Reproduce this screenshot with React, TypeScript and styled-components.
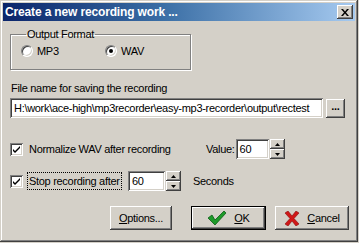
import React from "react";
import styled, { createGlobalStyle } from "styled-components";

const Global = createGlobalStyle`
  html, body { margin: 0; padding: 0; background: #d4d0c8; }
  body { font-family: "Liberation Sans", Arial, sans-serif; font-size: 11px; letter-spacing: -0.3px; color: #000; }
`;

const Window = styled.div`
  box-sizing: border-box;
  width: 358px;
  height: 242px;
  padding: 3px;
  background: #d4d0c8;
  box-shadow: inset -1px -1px #404040, inset 1px 1px #d4d0c8,
    inset -2px -2px #808080, inset 2px 2px #ffffff;
  display: flex;
  flex-direction: column;
`;

const TitleBar = styled.div`
  height: 18px;
  background: linear-gradient(90deg, #0a246a 0%, #3a6ea5 45%, #a6caf0 100%);
  display: flex;
  align-items: center;
  justify-content: space-between;
  padding: 0 2px 0 2px;
`;

const Title = styled.span`
  color: #fff;
  font-weight: bold;
  font-size: 12px;
  letter-spacing: -0.15px;
  font-family: "Liberation Sans", Arial, sans-serif;
  white-space: nowrap;
`;

const CloseBtn = styled.div`
  box-sizing: border-box;
  width: 16px;
  height: 14px;
  background: #d4d0c8;
  box-shadow: inset -1px -1px #404040, inset 1px 1px #ffffff, inset -2px -2px #808080;
  display: flex;
  align-items: center;
  justify-content: center;
`;

const Body = styled.div`
  flex: 1;
  display: flex;
  flex-direction: column;
  padding: 0 0 0 7px;
`;

const Group = styled.fieldset`
  width: 181px;
  box-sizing: border-box;
  height: 42px;
  margin: 7px 0 0 0;
  padding: 3px 0 0 10px;
  border: 1px solid #808080;
  box-shadow: inset 1px 1px #fff, 1px 1px #fff;
  display: flex;
`;

const Legend = styled.legend`
  padding: 0 1px;
  margin-left: 5px;
  font-size: 11px;
  line-height: 13px;
`;

const RadioLabel = styled.label`
  display: flex;
  align-items: center;
  gap: 4px;
  width: 84px;
  font-size: 11px;
  height: 14px;
`;

const RadioCircle = styled.span<{ $checked?: boolean }>`
  box-sizing: border-box;
  width: 12px;
  height: 12px;
  border-radius: 50%;
  background: #fff;
  border: 1px solid #808080;
  border-right-color: #fff;
  border-bottom-color: #fff;
  box-shadow: inset 1px 1px #404040, inset -1px -1px #d4d0c8;
  display: flex;
  align-items: center;
  justify-content: center;
  &::after {
    content: "";
    display: ${(p) => (p.$checked ? "block" : "none")};
    width: 4px;
    height: 4px;
    border-radius: 50%;
    background: #000;
  }
`;

const FieldLabel = styled.div`
  margin-top: 11px;
  padding-left: 1px;
  font-size: 11px;
  line-height: 14px;
`;

const Row = styled.div<{ $mt?: number }>`
  display: flex;
  align-items: center;
  margin-top: ${(p) => p.$mt ?? 0}px;
`;

const LeftCell = styled.div<{ $w: number }>`
  display: flex;
  align-items: center;
  width: ${(p) => p.$w}px;
  flex-shrink: 0;
`;

const Sunken = styled.div<{ $w: number; $h?: number }>`
  box-sizing: border-box;
  width: ${(p) => p.$w}px;
  height: ${(p) => p.$h ?? 20}px;
  background: #fff;
  box-shadow: inset 1px 1px #808080, inset -1px -1px #ffffff,
    inset 2px 2px #404040, inset -2px -2px #d4d0c8;
  padding: 3px 0 0 4px;
  font-size: 11px;
  line-height: 14px;
  white-space: nowrap;
  overflow: hidden;
`;

const RaisedButton = styled.div<{ $w: number; $h: number; $focus?: boolean }>`
  box-sizing: border-box;
  width: ${(p) => p.$w}px;
  height: ${(p) => p.$h}px;
  background: #d4d0c8;
  box-shadow: ${(p) =>
    p.$focus
      ? "inset -1px -1px #000, inset 1px 1px #000, inset -2px -2px #404040, inset 2px 2px #fff, inset -3px -3px #808080"
      : "inset -1px -1px #404040, inset 1px 1px #ffffff, inset -2px -2px #808080"};
  display: flex;
  align-items: center;
  justify-content: center;
  gap: 7px;
  font-size: 11px;
  flex-shrink: 0;
`;

const Spin = styled.div`
  display: flex;
  flex-direction: column;
  margin-left: 1px;
`;

const SpinBtn = styled.div`
  box-sizing: border-box;
  width: 15px;
  height: 10px;
  background: #d4d0c8;
  box-shadow: inset -1px -1px #404040, inset 1px 1px #ffffff, inset -2px -2px #808080;
  display: flex;
  align-items: center;
  justify-content: center;
`;

const Check = styled.span`
  box-sizing: border-box;
  width: 13px;
  height: 13px;
  background: #fff;
  box-shadow: inset 1px 1px #808080, inset -1px -1px #ffffff,
    inset 2px 2px #404040, inset -2px -2px #d4d0c8;
  display: flex;
  align-items: center;
  justify-content: center;
  flex-shrink: 0;
`;

const CheckText = styled.span<{ $focus?: boolean }>`
  font-size: 11px;
  line-height: 14px;
  margin-left: 4px;
  padding: 1px 1px;
  border: 1px dotted ${(p) => (p.$focus ? "#000" : "transparent")};
`;

const Plain = styled.span<{ $ml?: number }>`
  font-size: 11px;
  margin-left: ${(p) => p.$ml ?? 0}px;
`;

const Spacer = styled.div<{ $w: number }>`
  width: ${(p) => p.$w}px;
  flex-shrink: 0;
`;

const ButtonRow = styled.div`
  display: flex;
  margin-top: 15px;
  padding-left: 100px;
`;

const U = styled.span`
  text-decoration: underline;
`;

const Tick = () => (
  <svg width="9" height="9" viewBox="0 0 9 9">
    <path d="M1 4 L3 6 L8 1 L8 3 L3 8 L1 6 Z" fill="#000" />
  </svg>
);

const SpinArrows = () => (
  <Spin>
    <SpinBtn>
      <svg width="5" height="3" viewBox="0 0 5 3"><path d="M2.5 0 L5 3 L0 3 Z" fill="#000" /></svg>
    </SpinBtn>
    <SpinBtn>
      <svg width="5" height="3" viewBox="0 0 5 3"><path d="M0 0 L5 0 L2.5 3 Z" fill="#000" /></svg>
    </SpinBtn>
  </Spin>
);

export default function App() {
  return (
    <>
      <Global />
      <Window>
        <TitleBar>
          <Title>Create a new recording work ...</Title>
          <CloseBtn>
            <svg width="8" height="7" viewBox="0 0 8 7">
              <path d="M0 0 L2 0 L4 2.5 L6 0 L8 0 L5 3.5 L8 7 L6 7 L4 4.5 L2 7 L0 7 L3 3.5 Z" fill="#000" />
            </svg>
          </CloseBtn>
        </TitleBar>
        <Body>
          <Group>
            <Legend>Output Format</Legend>
            <RadioLabel>
              <RadioCircle />
              MP3
            </RadioLabel>
            <RadioLabel>
              <RadioCircle $checked />
              WAV
            </RadioLabel>
          </Group>
          <FieldLabel>File name for saving the recording</FieldLabel>
          <Row $mt={3}>
            <Sunken $w={313} $h={20}>H:\work\ace-high\mp3recorder\easy-mp3-recorder\output\rectest</Sunken>
            <Spacer $w={3} />
            <RaisedButton $w={19} $h={19}>
              <b style={{ fontSize: 11, marginTop: -4 }}>...</b>
            </RaisedButton>
          </Row>
          <Row $mt={21}>
            <LeftCell $w={196}>
              <Check><Tick /></Check>
              <CheckText>Normalize WAV after recording</CheckText>
            </LeftCell>
            <Plain>Value:</Plain>
            <Spacer $w={1} />
            <Sunken $w={33} $h={20}>60</Sunken>
            <SpinArrows />
          </Row>
          <Row $mt={12}>
            <LeftCell $w={118}>
              <Check><Tick /></Check>
              <CheckText $focus>Stop recording after</CheckText>
            </LeftCell>
            <Sunken $w={37} $h={20}>60</Sunken>
            <SpinArrows />
            <Plain $ml={12}>Seconds</Plain>
          </Row>
          <ButtonRow>
            <RaisedButton $w={62} $h={24}>
              <span><U>O</U>ptions...</span>
            </RaisedButton>
            <Spacer $w={19} />
            <RaisedButton $w={75} $h={24} $focus>
              <svg width="20" height="16" viewBox="0 0 20 16">
                <path d="M1 8 L5 5 L8 10 L17 1 L19 3 L8 15 Z" fill="#1e9a2a" stroke="#0b5e16" strokeWidth="0.8" />
              </svg>
              <span><U>O</U>K</span>
            </RaisedButton>
            <Spacer $w={9} />
            <RaisedButton $w={74} $h={24}>
              <svg width="16" height="15" viewBox="0 0 16 15">
                <path d="M1 2 L4 0 L8 5 L12 0 L15 2 L10 7.5 L15 13 L12 15 L8 10 L4 15 L1 13 L6 7.5 Z" fill="#d01818" stroke="#8a0c0c" strokeWidth="0.6" />
              </svg>
              <span><U>C</U>ancel</span>
            </RaisedButton>
          </ButtonRow>
        </Body>
      </Window>
    </>
  );
}
